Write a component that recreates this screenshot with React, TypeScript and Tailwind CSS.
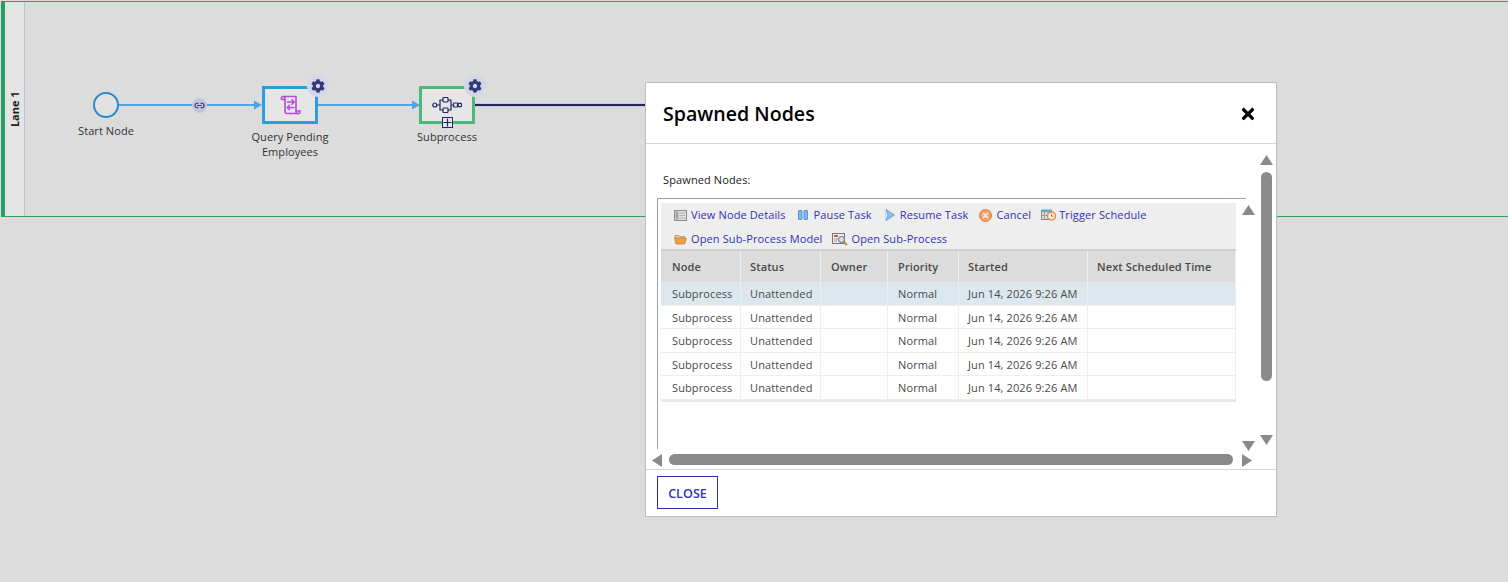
import React from 'react';
import { FaCog, FaTimes } from 'react-icons/fa';
import { Link2 } from 'lucide-react';

const FONT = { fontFamily: '"Open Sans", "Liberation Sans", sans-serif' };

function ScriptIcon() {
  return (
    <svg width="24" height="24" viewBox="0 0 24 24" fill="none" stroke="#b44fd4" strokeWidth="1.6" strokeLinejoin="round" strokeLinecap="round">
      <path d="M5 3.500h13v15.500a2 2 0 0 0 2.500 1.500H9a2 2 0 0 1-2-2V6a2.500 2.500 0 0 0-2-2.500 2 2 0 0 0-1.800 1.600c0 .8.6 1.400 1.400 1.400H7" />
      <path d="M18 18h4v1a1.500 1.500 0 0 1-1.500 1.500" />
      <path d="M9.500 9h6.500M14 6.800 16.200 9 14 11.200M16 14.500H9.500M11.500 12.300 9.300 14.500l2.200 2.200" />
    </svg>
  );
}

function SubprocessIcon() {
  return (
    <svg className="-ml-[1px]" width="30" height="18" viewBox="0 0 30 18" fill="none" stroke="#26265f" strokeWidth="1.2">
      <circle cx="2.800" cy="9" r="2" />
      <path d="M4.800 9h3.200M8 9V4h3M8 9v5h3M16 4h3v10h-3M19 9h2.500" />
      <rect x="11" y="1.500" width="5" height="4.500" rx="0.800" />
      <rect x="11" y="12" width="5" height="4.500" rx="0.800" />
      <rect x="21.500" y="7" width="4" height="4" rx="0.600" />
      <path d="M25.500 9h.5" />
      <circle cx="27.800" cy="9" r="1.800" />
    </svg>
  );
}

function DetailsIcon() {
  return (
    <svg width="13" height="11" viewBox="0 0 13 11">
      <rect x="0.500" y="0.500" width="12" height="10" fill="#dedede" stroke="#8c8c8c" />
      <rect x="1.500" y="1.500" width="3" height="8" fill="#a5a5a5" />
      <path d="M5.500 3h6M5.500 5.500h6M5.500 8h6" stroke="#b4b4b4" />
    </svg>
  );
}

function PauseIcon() {
  return (
    <svg width="10" height="10" viewBox="0 0 10 10">
      <rect x="0.500" y="0.500" width="3.500" height="9" rx="0.500" fill="#7db9ec" stroke="#3f86c8" strokeWidth="0.800" />
      <rect x="6" y="0.500" width="3.500" height="9" rx="0.500" fill="#7db9ec" stroke="#3f86c8" strokeWidth="0.800" />
    </svg>
  );
}

function ResumeIcon() {
  return (
    <svg width="10" height="12" viewBox="0 0 10 12">
      <path d="M1 0.500 9.500 6 1 11.500 3 6Z" fill="#8cc2ef" stroke="#5a98d4" strokeWidth="0.800" />
      <path d="M0.500 1v10" stroke="#bcdcf5" />
    </svg>
  );
}

function CancelIcon() {
  return (
    <svg width="13" height="13" viewBox="0 0 13 13">
      <circle cx="6.500" cy="6.500" r="6" fill="#f0a06a" stroke="#dc8144" />
      <path d="M4 4l5 5M9 4l-5 5" stroke="#fbe6d6" strokeWidth="1.800" />
    </svg>
  );
}

function TriggerIcon() {
  return (
    <svg width="15" height="12" viewBox="0 0 15 12">
      <rect x="0.500" y="1.500" width="10" height="9" fill="#ddd" stroke="#888" />
      <rect x="0.500" y="0.500" width="10" height="2.500" fill="#58acc8" />
      <path d="M3.500 3v7M7 3v7M1 6.500h9" stroke="#999" />
      <circle cx="10.500" cy="7" r="4" fill="#f4f0ea" stroke="#e58b3c" strokeWidth="1.400" />
      <path d="M10.500 5v2.200h1.800" stroke="#c96a20" fill="none" />
    </svg>
  );
}

function FolderIcon() {
  return (
    <svg width="13" height="12" viewBox="0 0 13 12">
      <path d="M1 2.500h4l1 1.200h4.500V6H1Z" fill="#d4d0c4" stroke="#a87a3a" strokeWidth="0.700" />
      <path d="M0.600 5h11.800l-1.700 6H2Z" fill="#f0a040" stroke="#c67a20" strokeWidth="0.700" />
    </svg>
  );
}

function OpenProcessIcon() {
  return (
    <svg width="16" height="13" viewBox="0 0 16 13">
      <rect x="0.500" y="0.500" width="12" height="10" fill="#eee" stroke="#777" />
      <rect x="2" y="2" width="4" height="2" fill="#d9534f" />
      <path d="M2 6h4M2 8h3" stroke="#999" />
      <circle cx="9.500" cy="6.500" r="3" fill="#cfe3ee" stroke="#667" />
      <path d="M11.500 8.800 15 12" stroke="#b8862d" strokeWidth="1.800" />
    </svg>
  );
}

const ACTIONS_TOP = [
  { icon: DetailsIcon, label: 'View Node Details', slot: 'w-[17px]', space: '' },
  { icon: PauseIcon, label: 'Pause Task', slot: 'w-[16px]', space: 'ml-[12px]' },
  { icon: ResumeIcon, label: 'Resume Task', slot: 'w-[15px]', space: 'ml-[13px]' },
  { icon: CancelIcon, label: 'Cancel', slot: 'w-[17px]', space: 'ml-[11px]' },
  { icon: TriggerIcon, label: 'Trigger Schedule', slot: 'w-[18px]', space: 'ml-[10px]' },
];

const ACTIONS_BOTTOM = [
  { icon: FolderIcon, label: 'Open Sub-Process Model', slot: 'w-[17px]', space: '' },
  { icon: OpenProcessIcon, label: 'Open Sub-Process', slot: 'w-[19px]', space: 'ml-[10px]' },
];

const COLUMNS = ['Node', 'Status', 'Owner', 'Priority', 'Started', 'Next Scheduled Time'];
const COLUMN_PAD = ['pl-[11px]', 'pl-[9px]', 'pl-[10px]', 'pl-[10px]', 'pl-[9px]', 'pl-[9px]'];
const GRID = 'grid grid-cols-[80px_80px_67px_71px_129px_148px]';

function ActionRow({ items }: { items: typeof ACTIONS_TOP }) {
  return (
    <div className="flex items-center h-[24px]">
      {items.map((item) => (
        <a key={item.label} className={`flex items-center text-[#3232b4] text-[11px] leading-4 tracking-[0.12px] ${item.space}`}>
          <span className={`flex items-center ${item.slot}`}>
            <item.icon />
          </span>
          <span>{item.label}</span>
        </a>
      ))}
    </div>
  );
}

function Row({ selected }: { selected?: boolean }) {
  const cells = ['Subprocess', 'Unattended', '', 'Normal', 'Jun 14, 2026 9:26 AM', ''];
  return (
    <div className={`${GRID} h-[23.5px] border-b border-[#eeeeee] ${selected ? 'bg-[#dce8ee]' : 'bg-white'}`}>
      {cells.map((c, i) => (
        <div key={i} className={`flex items-center pt-[2px] border-r border-[#eeeeee] text-[11px] tracking-[0.12px] text-[#4a4a4a] whitespace-nowrap ${COLUMN_PAD[i]}`}>
          {c}
        </div>
      ))}
    </div>
  );
}

function Triangle({ dir }: { dir: 'up' | 'down' | 'left' | 'right' }) {
  const points = { up: '0,10 6.5,0 13,10', down: '0,0 13,0 6.5,10', left: '10,0 10,13 0,6.5', right: '0,0 10,6.5 0,13' }[dir];
  const horizontal = dir === 'left' || dir === 'right';
  return (
    <svg className="shrink-0" width={horizontal ? 10 : 13} height={horizontal ? 13 : 10}>
      <polygon points={points} fill="#8a8a8a" />
    </svg>
  );
}

function Modal() {
  return (
    <div className="absolute left-[645px] top-[82px] w-[632px] h-[435px] bg-white border border-[#bdbdbd] flex flex-col">
      <div className="h-[61px] shrink-0 flex items-center justify-between pt-[2px] pl-[17px] pr-[19px] border-b border-[#d6d6d6]">
        <h2 className="text-[19.6px] font-semibold text-black">Spawned Nodes</h2>
        <FaTimes className="w-[18px] h-[18px] text-black" />
      </div>
      <div className="relative h-[325px] shrink-0 overflow-hidden">
        <div className="pt-[28px] pl-[17px] text-[11px] leading-4 tracking-[0.12px] text-[#222]">Spawned Nodes:</div>
        <div className="mt-[10px] ml-[11px] w-[589px] h-[251px] border-t border-l border-[#94a3ad] pl-[3px] pt-[4px]">
          <div className="w-[575px] h-[48px] bg-[#eeeeee] border-b-2 border-[#cfcfcf] pl-[13px]">
            <ActionRow items={ACTIONS_TOP} />
            <ActionRow items={ACTIONS_BOTTOM} />
          </div>
          <div className="w-[575px] border-b-2 border-[#e8e8e8]">
            <div className={`${GRID} h-[31px] bg-[#dcdcdc]`}>
              {COLUMNS.map((c, i) => (
                <div key={c} className={`flex items-center pt-[2px] border-r border-[#efefef] text-[11px] tracking-[0.12px] font-semibold text-[#4a4a4a] whitespace-nowrap ${COLUMN_PAD[i]}`}>
                  {c}
                </div>
              ))}
            </div>
            <Row selected />
            <Row />
            <Row />
            <Row />
            <Row />
          </div>
        </div>
        {/* overlay scrollbars */}
        <div className="absolute left-[614px] top-[11px] h-[290px] flex flex-col items-center gap-[7px]">
          <Triangle dir="up" />
          <div className="w-[11px] h-[209px] rounded-full bg-[#8a8a8a]" />
          <div className="mt-[47px]">
            <Triangle dir="down" />
          </div>
        </div>
        <div className="absolute left-[596px] top-[61px] h-[246px] flex flex-col justify-between">
          <Triangle dir="up" />
          <Triangle dir="down" />
        </div>
        <div className="absolute left-[6px] top-[310px] w-[600px] flex items-start justify-between">
          <Triangle dir="left" />
          <div className="w-[564px] h-[11px] mr-[2px] rounded-full bg-[#8a8a8a]" />
          <Triangle dir="right" />
        </div>
      </div>
      <div className="flex-1 border-t border-[#d6d6d6] pl-[11px] pt-[6px]">
        <button className="w-[61px] h-[33px] pt-[3px] border border-[#2f2f9f] text-[12.6px] font-semibold text-[#3232b4]">CLOSE</button>
      </div>
    </div>
  );
}

function TaskNode({
  children,
  color,
  label,
  marker,
  className,
}: {
  children: React.ReactNode;
  color: string;
  label: React.ReactNode;
  marker?: boolean;
  className: string;
}) {
  return (
    <div className={`absolute flex flex-col items-center ${className}`}>
      <div className="relative w-[56px] h-[38px]">
        <div className={`w-full h-full border-[3px] bg-[#e6e6e6] flex items-center justify-center ${color}`}>{children}</div>
        <div className="absolute left-[45px] top-[-11px] w-[22px] h-[22px] rounded-full bg-[#d5d7e8] flex items-center justify-center">
          <FaCog className="w-[14px] h-[14px] text-[#2f3a78]" />
        </div>
        {marker && (
          <div className="absolute left-[23px] top-[31px] w-[11px] h-[11px] border border-[#26265f] bg-[#e6e6e6] flex items-center justify-center">
            <svg width="9" height="9" viewBox="0 0 9 9">
              <path d="M4.500 0.500V8.500M0.500 4.500H8.500" stroke="#26265f" strokeWidth="1.200" />
            </svg>
          </div>
        )}
      </div>
      <div className="mt-[4.5px] text-center">{label}</div>
    </div>
  );
}

function Canvas() {
  return (
    <div className="relative flex-1 text-[11px] leading-[15px] tracking-[0.08px] text-[#333]">
      {/* connectors, canvas x = page x - 25, y = page y - 2 */}
      <svg className="absolute inset-0" width="1483" height="214">
        <path d="M94 103H230M293 103H388" stroke="#4ea5e2" strokeWidth="2" />
        <polygon points="229,98.500 237,103 229,107.500" fill="#4ea5e2" />
        <polygon points="387,98.500 395,103 387,107.500" fill="#4ea5e2" />
        <path d="M450 103H620" stroke="#c3c5dc" strokeWidth="3.500" />
        <path d="M450 103H620" stroke="#26265f" strokeWidth="2" />
      </svg>

      <div className="absolute left-[41px] top-[90px] w-[80px] flex flex-col items-center">
        <div className="w-[26px] h-[26px] rounded-full border-2 border-[#2d8bc9] bg-[#e2e2e2]" />
        <div className="mt-[4.5px]">Start Node</div>
      </div>

      <div className="absolute left-[167px] top-[95.500px] w-[15px] h-[15px] rounded-full bg-[#c5c6de] flex items-center justify-center">
        <Link2 className="w-[11px] h-[11px] text-[#35356f]" strokeWidth={2.4} />
      </div>

      <TaskNode
        className="left-[205px] top-[84px] w-[120px]"
        color="border-[#2a9ee0]"
        label={
          <>
            Query Pending
            <br />
            Employees
          </>
        }
      >
        <ScriptIcon />
      </TaskNode>

      <TaskNode className="left-[372px] top-[84px] w-[100px]" color="border-[#4cb87a]" label="Subprocess" marker>
        <SubprocessIcon />
      </TaskNode>
    </div>
  );
}

export default function App() {
  return (
    <div className="relative w-[1508px] h-[582px] overflow-hidden bg-[#dcdcdc]" style={FONT}>
      <div className="mt-px ml-px h-[216px] flex border-t border-b border-[#2f9e63]">
        <div className="w-[4px] bg-[#2a9d63]" />
        <div className="w-[20px] bg-[#e4e4e4] border-r border-[#bfc0d8] flex items-center justify-center">
          <span className="-rotate-90 whitespace-nowrap text-[11px] font-bold text-[#222]">Lane 1</span>
        </div>
        <Canvas />
      </div>
      <Modal />
    </div>
  );
}
